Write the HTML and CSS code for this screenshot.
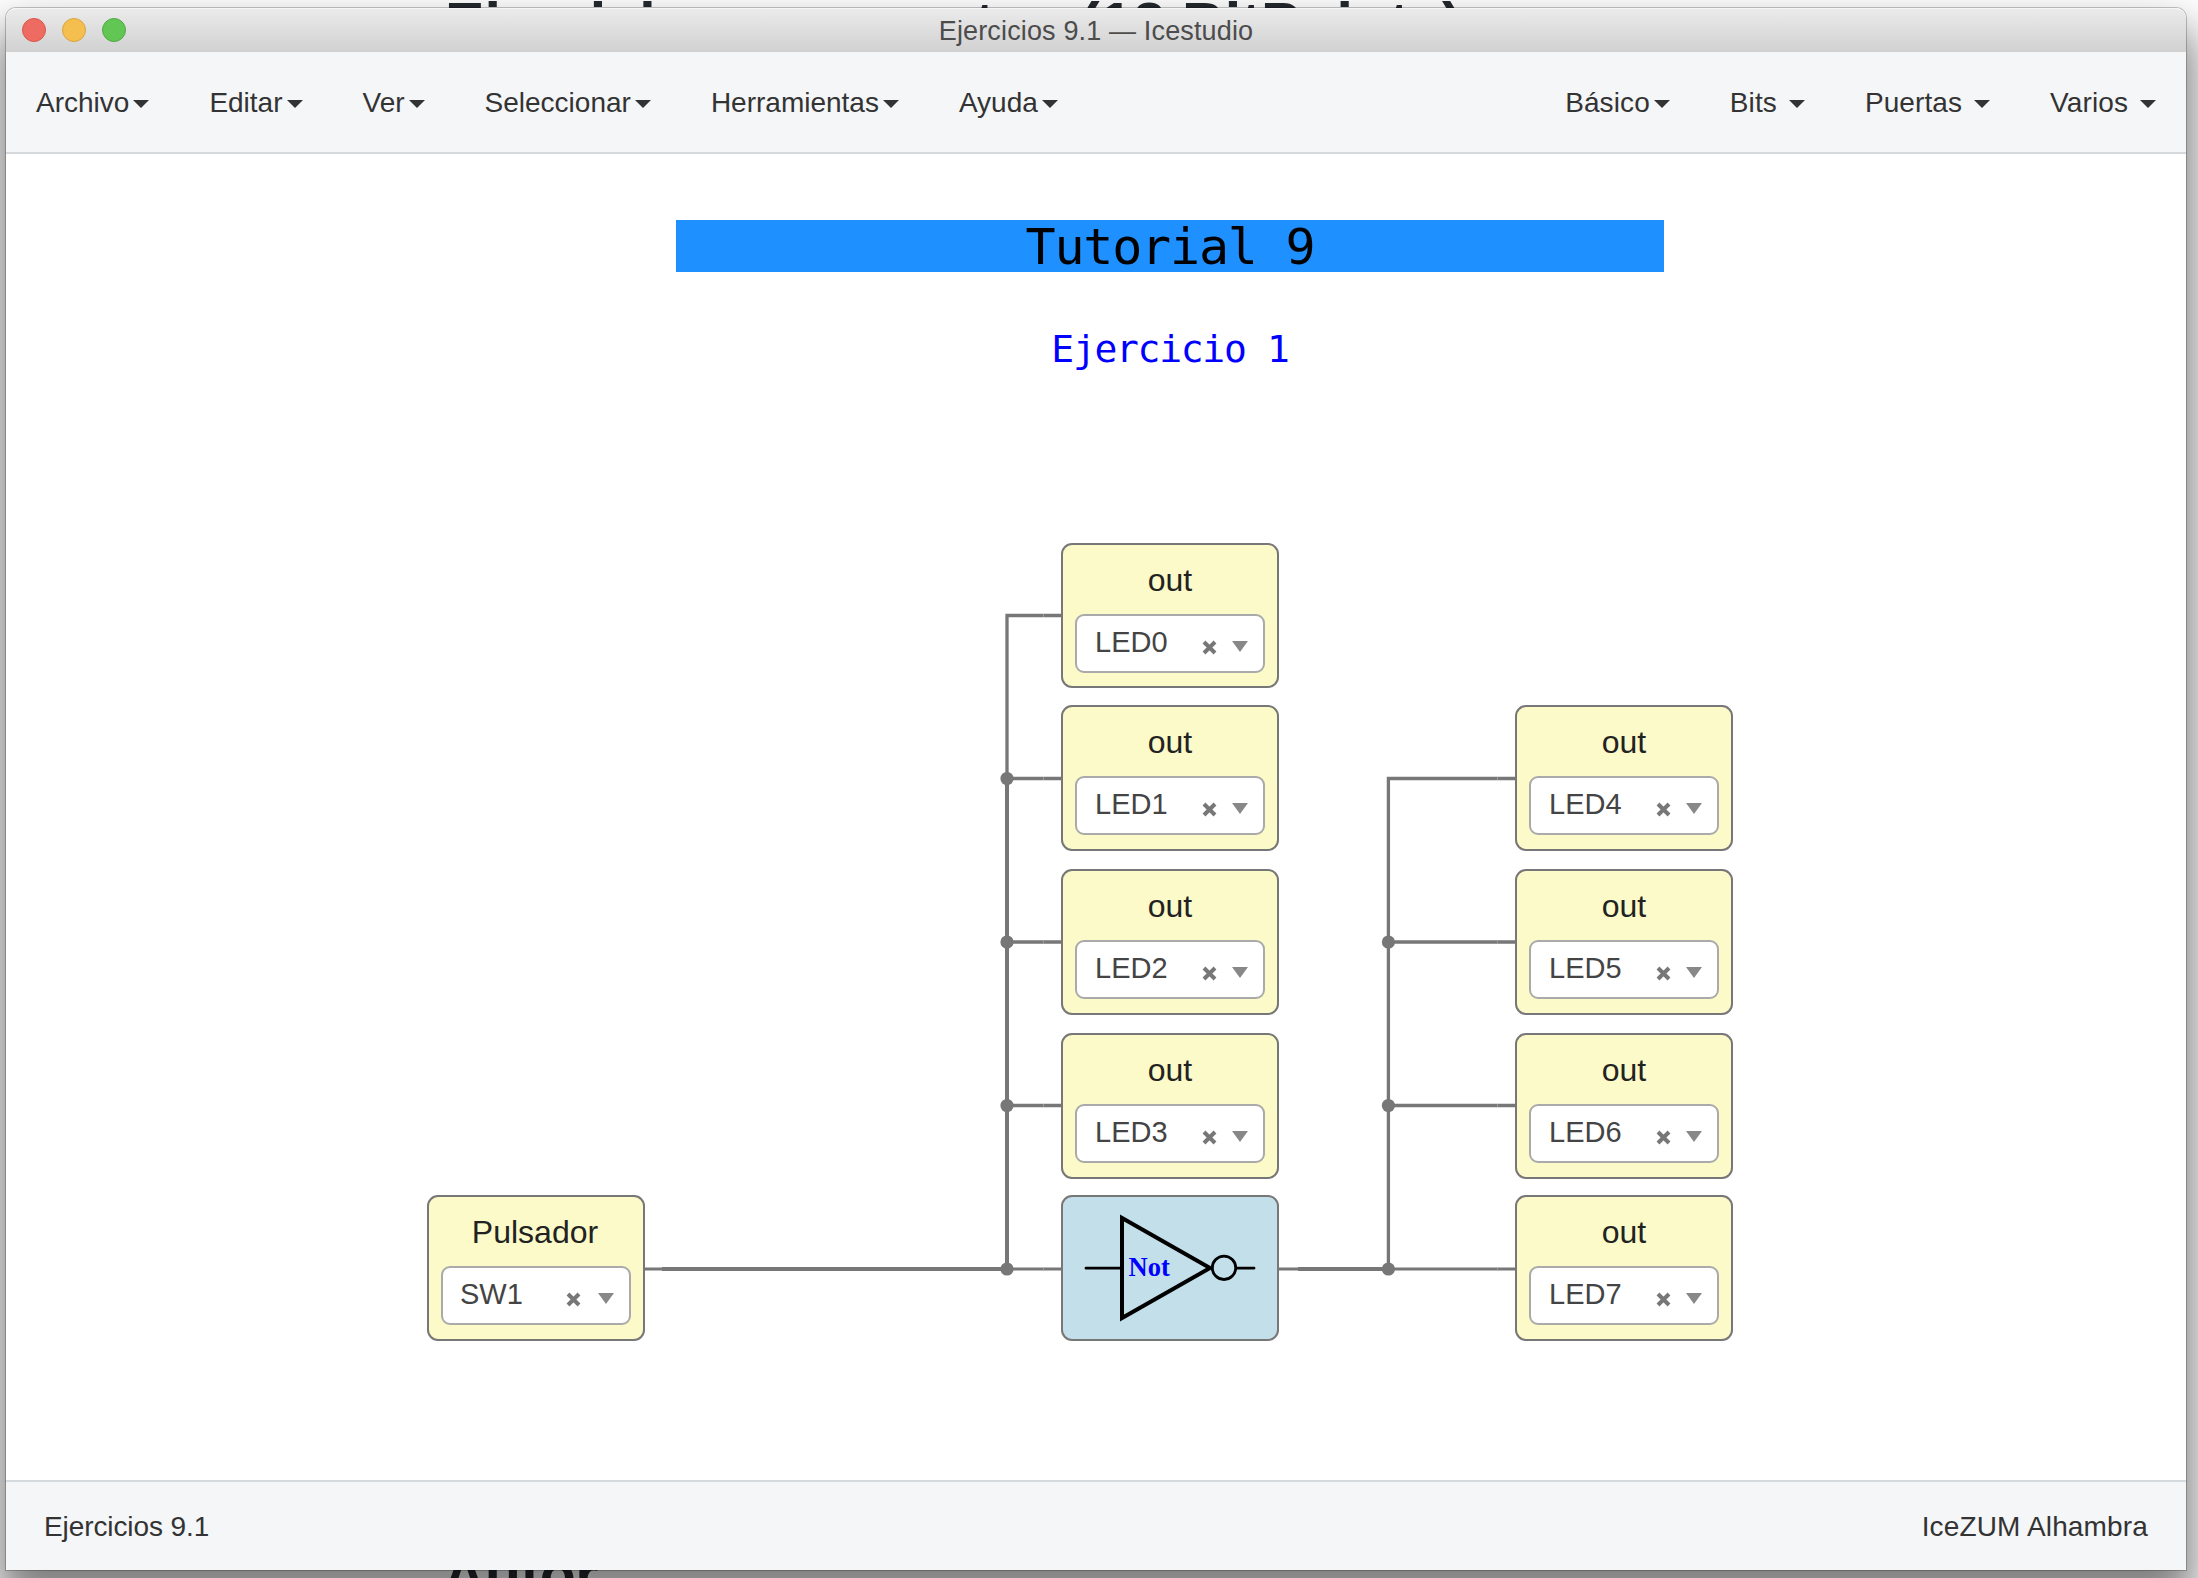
FILE: index.html
```html
<!DOCTYPE html>
<html lang="es">
<head>
<meta charset="utf-8">
<title>Ejercicios 9.1 — Icestudio</title>
<link rel="stylesheet" href="styles.css">
</head>
<body>
<div class="backdrop">
  <p class="behind behind-top">Ejercicios propuestos (12 BitPoints)</p>
  <p class="behind behind-bottom">Autor</p>
</div>
<div class="window">
  <header class="titlebar">
    <div class="lights"><i class="light red"></i><i class="light yellow"></i><i class="light green"></i></div>
    <h1 class="title">Ejercicios 9.1 — Icestudio</h1>
  </header>
  <nav class="menubar">
    <div class="menus">
      <a class="menu">Archivo<i class="caret"></i></a>
      <a class="menu">Editar<i class="caret"></i></a>
      <a class="menu">Ver<i class="caret"></i></a>
      <a class="menu">Seleccionar<i class="caret"></i></a>
      <a class="menu">Herramientas<i class="caret"></i></a>
      <a class="menu">Ayuda<i class="caret"></i></a>
    </div>
    <div class="menus libraries">
      <a class="menu">Básico<i class="caret"></i></a>
      <a class="menu spaced">Bits<i class="caret"></i></a>
      <a class="menu spaced">Puertas<i class="caret"></i></a>
      <a class="menu spaced">Varios<i class="caret"></i></a>
    </div>
  </nav>
  <main class="canvas">
    <h2 class="banner">Tutorial 9</h2>
    <h3 class="exercise">Ejercicio 1</h3>
    <svg class="wires" viewBox="6 154 2180 1326" width="2180" height="1326">
      <g fill="none" stroke="#777" stroke-width="3.3">
        <path d="M1061 615.5H1007V1269M1007 778.5H1061M1007 942H1061M1007 1105.5H1061"/>
        <path d="M1515 778.5H1388.4V1269M1388.4 942H1515M1388.4 1105.5H1515"/>
        <path stroke-width="3" d="M645 1269H662M1007 1269H1061M1279 1269H1298M1388 1269H1515"/>
        <path stroke-width="4" d="M662 1269H1007M1298 1269H1388M1007 778V1269"/>
      </g>
      <g fill="#777">
        <circle cx="1007" cy="778.5" r="6.6"/><circle cx="1007" cy="942" r="6.6"/><circle cx="1007" cy="1105.5" r="6.6"/><circle cx="1007" cy="1269" r="6.6"/>
        <circle cx="1388.4" cy="942" r="6.6"/><circle cx="1388.4" cy="1105.5" r="6.6"/><circle cx="1388.4" cy="1269" r="6.6"/>
      </g>
      <path stroke="#aaa" stroke-width=".7" d="M1043.5 614v3M1043.5 777v3M1043.5 940.5v3M1043.5 1104v3M1043.5 1267.5v3M1497.5 777v3M1497.5 940.5v3M1497.5 1104v3M1497.5 1267.5v3"/>
    </svg>

    <section class="block led0"><h4>out</h4><div class="select"><span>LED0</span><svg class="x" viewBox="0 0 15 15"><path d="M2 2l11 11M13 2L2 13"/></svg><i class="arrow"></i></div></section>
    <section class="block led1"><h4>out</h4><div class="select"><span>LED1</span><svg class="x" viewBox="0 0 15 15"><path d="M2 2l11 11M13 2L2 13"/></svg><i class="arrow"></i></div></section>
    <section class="block led2"><h4>out</h4><div class="select"><span>LED2</span><svg class="x" viewBox="0 0 15 15"><path d="M2 2l11 11M13 2L2 13"/></svg><i class="arrow"></i></div></section>
    <section class="block led3"><h4>out</h4><div class="select"><span>LED3</span><svg class="x" viewBox="0 0 15 15"><path d="M2 2l11 11M13 2L2 13"/></svg><i class="arrow"></i></div></section>
    <section class="block led4"><h4>out</h4><div class="select"><span>LED4</span><svg class="x" viewBox="0 0 15 15"><path d="M2 2l11 11M13 2L2 13"/></svg><i class="arrow"></i></div></section>
    <section class="block led5"><h4>out</h4><div class="select"><span>LED5</span><svg class="x" viewBox="0 0 15 15"><path d="M2 2l11 11M13 2L2 13"/></svg><i class="arrow"></i></div></section>
    <section class="block led6"><h4>out</h4><div class="select"><span>LED6</span><svg class="x" viewBox="0 0 15 15"><path d="M2 2l11 11M13 2L2 13"/></svg><i class="arrow"></i></div></section>
    <section class="block led7"><h4>out</h4><div class="select"><span>LED7</span><svg class="x" viewBox="0 0 15 15"><path d="M2 2l11 11M13 2L2 13"/></svg><i class="arrow"></i></div></section>
    <section class="block sw1"><h4>Pulsador</h4><div class="select"><span>SW1</span><svg class="x" viewBox="0 0 15 15"><path d="M2 2l11 11M13 2L2 13"/></svg><i class="arrow"></i></div></section>
    <section class="block gate">
      <svg viewBox="1063 1197 214 141" width="214" height="141">
        <g fill="none" stroke="#000" stroke-linecap="round">
          <path stroke-width="4" stroke-linecap="butt" d="M1122 1218V1318L1210 1268Z"/>
          <path stroke-width="2.8" d="M1086 1268.2H1121M1237 1268.2H1254"/>
          <circle cx="1224" cy="1267.8" r="11.7" stroke-width="2.8"/>
        </g>
        <text class="gate-name" x="1128.5" y="1276">Not</text>
      </svg>
    </section>
  </main>
  <footer class="status"><span class="project">Ejercicios 9.1</span><span class="board">IceZUM Alhambra</span></footer>
</div>
</body>
</html>
```
FILE: styles.css
```css
* { box-sizing: border-box; }
body {
  margin: 0;
  width: 2198px;
  height: 1578px;
  padding: 8px 12px 8px 6px;
  overflow: hidden;
  background: #fff;
  font-family: "Liberation Sans", Arial, sans-serif;
  color: #333;
}
h1, h2, h3, h4, p { margin: 0; font-weight: normal; }

.backdrop { position: absolute; inset: 0; overflow: hidden; }
.behind {
  position: absolute;
  left: 445px;
  font-size: 59px;
  line-height: 68px;
  font-weight: bold;
  color: #24292e;
  white-space: nowrap;
}
.behind-top { top: -10px; letter-spacing: .1px; }
.behind-bottom { top: 1541px; left: 443px; letter-spacing: -.5px; }

.window {
  position: relative;
  display: flex;
  flex-direction: column;
  height: 1562px;
  border-radius: 10px 10px 0 0;
  background: #fff;
  box-shadow: 0 0 0 1px rgba(0,0,0,.22), 0 28px 44px 8px rgba(0,0,0,.5);
}
.titlebar {
  position: relative;
  display: flex;
  align-items: center;
  justify-content: center;
  height: 44px;
  border-radius: 10px 10px 0 0;
  background: linear-gradient(#ebebeb, #d1d1d1);
  box-shadow: inset 0 1px #f6f6f6;
}
.lights { position: absolute; left: 16px; top: 10px; display: flex; gap: 16px; }
.light { width: 24px; height: 24px; border-radius: 50%; border: 1px solid; }
.red { background: #ed6b60; border-color: #d9564c; }
.yellow { background: #f5bf4f; border-color: #d9a440; }
.green { background: #62c655; border-color: #52a943; }
.title { font-size: 27px; letter-spacing: .15px; line-height: 44px; padding-top: 1px; color: #4c4c4c; }

.menubar {
  display: flex;
  justify-content: space-between;
  height: 102px;
  background: #f5f6f8;
  border-bottom: 2px solid #d6d9db;
}
.menus { display: flex; }
.menu { display: flex; align-items: center; padding: 1px 30px 0; font-size: 28px; line-height: 100px; }
.caret { margin-left: 4px; margin-top: 3px; border: 8px solid transparent; border-top-color: #333; border-bottom: 0; }
.spaced .caret { margin-left: 12px; }
.libraries { letter-spacing: .1px; }

.canvas { position: relative; flex: 1; padding-top: 66px; }
.banner, .exercise { font-family: "DejaVu Sans Mono", monospace; text-align: center; }
.banner {
  width: 988px;
  height: 52px;
  margin-left: 670px;
  background: #1e90ff;
  color: #000;
  font-size: 50px;
  letter-spacing: -1.2px;
  line-height: 54px;
}
.exercise { width: 988px; margin: 50px 0 0 670px; color: #00f; font-size: 38px; letter-spacing: -1.3px; line-height: 54px; }
.wires { position: absolute; left: 0; top: 0; }

.block {
  position: absolute;
  width: 218px;
  height: 146px;
  border: 2px solid #777;
  border-radius: 11px;
  background: #fbfac8;
}
.block h4 { height: 69px; padding-top: 1px; font-size: 32px; line-height: 69px; text-align: center; color: #222; }
.led0, .led1, .led2, .led3, .gate { left: 1055px; }
.led4, .led5, .led6, .led7 { left: 1509px; }
.sw1 { left: 421px; }
.led0 { top: 389px; height: 145px; }
.led1, .led4 { top: 551px; }
.led2, .led5 { top: 715px; }
.led3, .led6 { top: 879px; }
.led7, .sw1, .gate { top: 1041px; }
.sw1 h4 { padding-right: 2px; }
.gate { background: #c2dfea; }
.gate svg { display: block; }
.gate-name { font: bold 26.5px "Liberation Serif", serif; fill: #00f; }

.select {
  display: flex;
  align-items: center;
  width: 190px;
  height: 59px;
  margin-left: 12px;
  padding: 0 10px 0 18px;
  border: 2px solid #aaa;
  border-radius: 9px;
  background: #fff;
  font-size: 29px;
  line-height: 52px;
  color: #444;
}
.select span { width: 92px; height: 55px; }
.sw1 .select span { margin-left: -1px; }
.sw1 .x { margin-left: 14px; margin-right: 17px; }
.x { flex: none; width: 15px; height: 15px; margin: 8px 15px 0 15px; fill: none; stroke: #777; stroke-width: 4; }
.arrow { margin-top: 6px; border: 8.5px solid transparent; border-top: 11px solid #888; border-bottom: 0; }

.status {
  display: flex;
  align-items: center;
  justify-content: space-between;
  height: 90px;
  padding: 1px 38px 0;
  border-top: 2px solid #d4dadd;
  background: #f5f6f8;
  font-size: 28px;
}
.project { letter-spacing: -.1px; }
.board { letter-spacing: .15px; }
```
